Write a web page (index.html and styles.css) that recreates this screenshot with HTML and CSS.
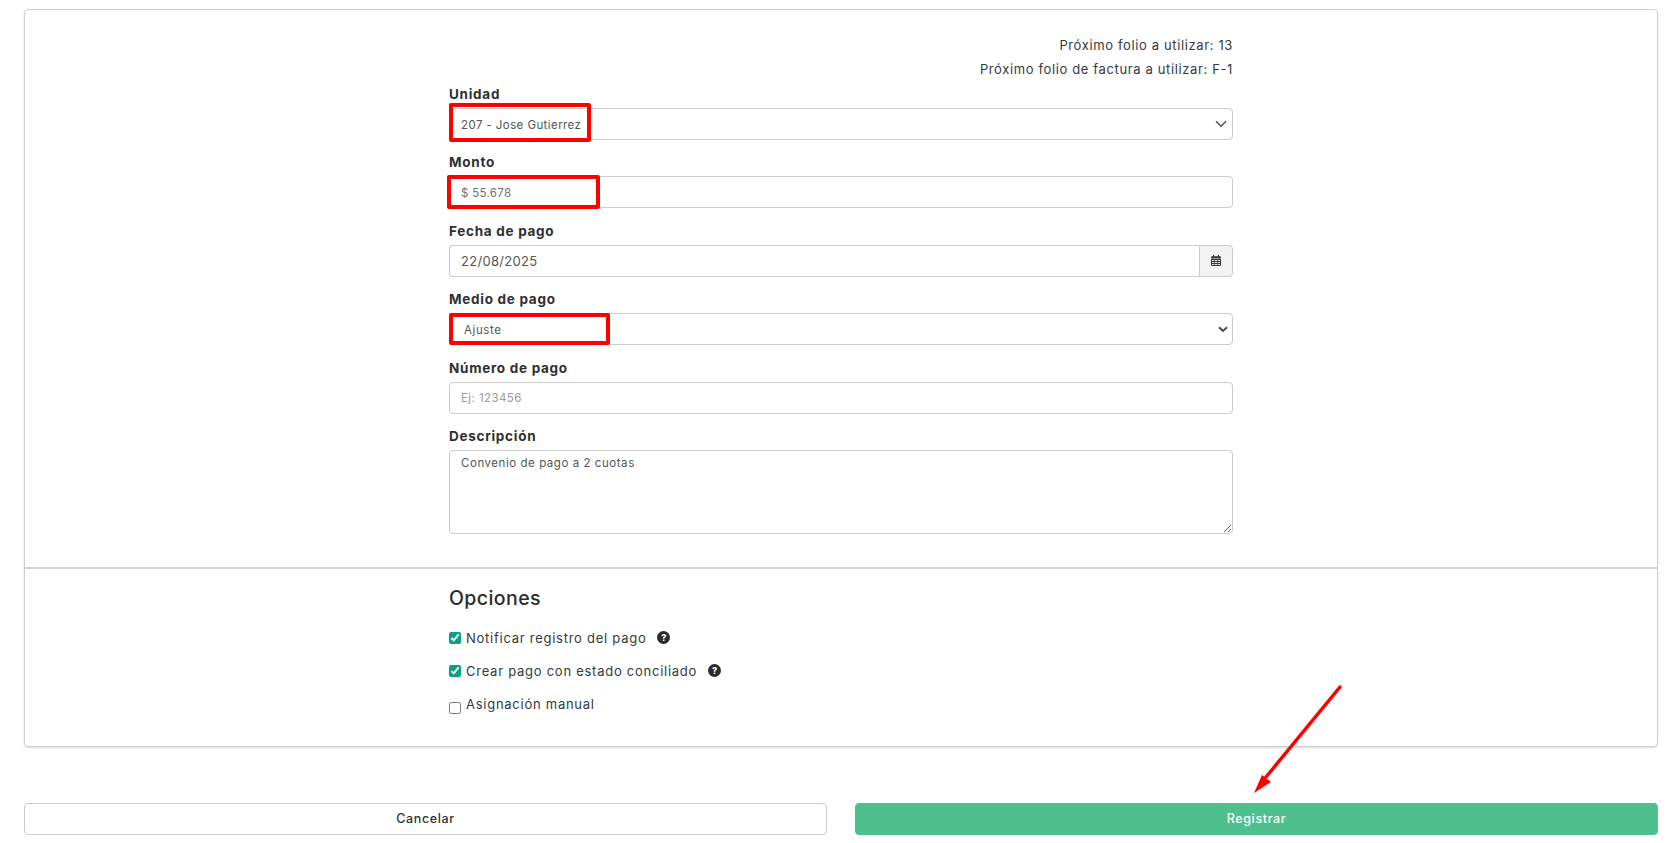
FILE: index.html
```html
<!DOCTYPE html>
<html lang="es">
<head>
<meta charset="utf-8">
<title>Registrar pago</title>
<link rel="stylesheet" href="styles.css">
</head>
<body>
<main class="page">
  <section class="card">
    <div class="form-part">
      <div class="col">
        <p class="folio first">Próximo folio a utilizar: 13</p>
        <p class="folio">Próximo folio de factura a utilizar: F-1</p>
        <div class="field">
          <label class="label">Unidad</label>
          <div class="control-box">
            <select class="control pick"><option>207 - Jose Gutierrez</option></select>
            <svg class="chev-thin" viewBox="0 0 12 8"><path d="M1 1.2l5 5 5-5" fill="none" stroke="#4a5560" stroke-width="1.5"/></svg>
            <span class="mark mark-unit"></span>
          </div>
        </div>
        <div class="field">
          <label class="label">Monto</label>
          <div class="control-box">
            <input class="control muted" value="$ 55.678">
            <span class="mark mark-monto"></span>
          </div>
        </div>
        <div class="field">
          <label class="label">Fecha de pago</label>
          <div class="group">
            <input class="control date" value="22/08/2025">
            <span class="addon">
              <svg class="cal" viewBox="0 0 10 11"><path fill="#343a40" d="M2 0h1.2v1.3h3.6V0H8v1.3h1.2c.4 0 .8.4.8.8V3.400H0V2.100c0-.4.4-.8.8-.8H2zM0 4h10v6.200c0 .4-.4.8-.8.8H.8c-.4 0-.8-.4-.8-.8zm1 1.100v1h1.800v-1zm2.600 0v1h2.800v-1zm3.600 0v1H9v-1zM1 7v1h1.800V7zm2.600 0v1h2.800V7zm3.600 0v1H9V7zM1 9v1h1.800V9zm2.600 0v1h2.800V9zm3.600 0v1H9V9z"/></svg>
            </span>
          </div>
        </div>
        <div class="field">
          <label class="label">Medio de pago</label>
          <div class="control-box">
            <select class="control pick medio"><option>Ajuste</option></select>
            <svg class="chev-bold" viewBox="0 0 10 7"><path d="M1 1.300l4 3.700 4-3.700" fill="none" stroke="#4a4a4a" stroke-width="2"/></svg>
            <span class="mark mark-medio"></span>
          </div>
        </div>
        <div class="field">
          <label class="label">Número de pago</label>
          <input class="control" placeholder="Ej: 123456">
        </div>
        <div class="field">
          <label class="label">Descripción</label>
          <textarea class="control area">Convenio de pago a 2 cuotas</textarea>
        </div>
      </div>
    </div>
    <div class="options-part">
      <div class="col">
        <h2 class="title">Opciones</h2>
        <div class="check-row">
          <input class="check" type="checkbox" checked>
          <span class="check-text">Notificar registro del pago</span>
          <span class="help">?</span>
        </div>
        <div class="check-row">
          <input class="check" type="checkbox" checked>
          <span class="check-text">Crear pago con estado conciliado</span>
          <span class="help">?</span>
        </div>
        <div class="check-row">
          <input class="check low" type="checkbox">
          <span class="check-text">Asignación manual</span>
        </div>
      </div>
    </div>
  </section>
  <div class="actions">
    <button class="btn cancel">Cancelar</button>
    <button class="btn submit">Registrar</button>
  </div>
</main>
<svg class="arrow" viewBox="0 0 100 120"><path d="M90 7L16 97" fill="none" stroke="#ff0000" stroke-width="3.500" stroke-linecap="round"/><path d="M4 113L12 95L21 102z" fill="#ff0000"/></svg>
</body>
</html>
```
FILE: styles.css
```css
* { box-sizing: border-box; }
html, body { margin: 0; padding: 0; background: #fff; }
body { font-family: "Inter", "Liberation Sans", sans-serif; color: #2b2b2b; position: relative; height: 843px; overflow: hidden; }
.page { padding: 9px 18px 0 24px; }
.card { border: 1px solid #cfcfcf; border-radius: 4px; box-shadow: 0 1px 2px rgba(0,0,0,.15); height: 738px; display: flex; flex-direction: column; }
.form-part { height: 559px; border-bottom: 2px solid #d2d2d2; padding-top: 27px; }
.options-part { flex: 1; padding-top: 17px; }
.col { width: 784px; margin-left: 424px; }
.folio { margin: 0 0 8px; height: 16px; line-height: 16px; text-align: right; font-size: 13px; letter-spacing: .63px; color: #343a40; }
.field { margin-bottom: 13.400px; }
.label { display: block; height: 23px; line-height: 18px; font-size: 13.500px; font-weight: 700; letter-spacing: .72px; color: #2f2f2f; }
.control-box { position: relative; }
.control { display: block; width: 100%; height: 32px; border: 1px solid #cbcbcb; border-radius: 4px; background: #fff; padding: 0 11px; font: 400 11.500px "Inter", "Liberation Sans", sans-serif; letter-spacing: .42px; color: #555; appearance: none; outline: none; }
.control::placeholder { color: #9a9a9a; opacity: 1; }
.pick { padding-top: 2px; }
.muted { color: #707070; letter-spacing: .3px; padding-top: 2px; }
.medio { padding-left: 14px; letter-spacing: .6px; }
.date { font-size: 13px; flex: 1; border-radius: 4px 0 0 4px; border-right: 0; color: #555; letter-spacing: .3px; }
.group { display: flex; height: 32px; }
.addon { width: 34px; border: 1px solid #cbcbcb; border-radius: 0 4px 4px 0; background: #f3f3f3; display: flex; align-items: center; justify-content: center; }
.cal { width: 10px; height: 11px; }
.area { height: 84px; padding-top: 5px; resize: vertical; line-height: 14px; letter-spacing: .55px; }
.chev-thin { position: absolute; right: 6px; top: 12px; width: 12px; height: 8px; }
.chev-bold { position: absolute; right: 5px; top: 13px; width: 10px; height: 7px; }
.mark { position: absolute; border: 4px solid #ff0000; border-radius: 2px; pointer-events: none; }
.mark-unit { left: 0; top: -5px; width: 142px; height: 39px; }
.mark-monto { left: -2px; top: -1px; width: 153px; height: 34px; }
.mark-medio { left: 0; top: 0; width: 161px; height: 32px; }
.title { margin: 0 0 19px; height: 24px; line-height: 24px; font-size: 19.500px; font-weight: 500; letter-spacing: .42px; color: #2b2b2b; }
.check-row { display: flex; align-items: center; height: 17px; margin-bottom: 16px; }
.check { width: 12px; height: 12px; margin: 0 5px 0 0; accent-color: #0b9f83; flex: none; }
.check.low { position: relative; top: 4px; }
.check-text { font-size: 13px; letter-spacing: .74px; color: #343a40; }
.help { width: 13px; height: 13px; margin-left: 11px; border-radius: 50%; background: #292b2c; color: #fff; font-size: 9px; font-weight: 800; line-height: 13px; text-align: center; }
.actions { display: flex; gap: 28px; margin-top: 56px; }
.btn { flex: 1; height: 32px; padding: 0 0 2px; border-radius: 4px; font: 500 12.500px "Inter", "Liberation Sans", sans-serif; letter-spacing: .65px; }
.cancel { background: #fff; border: 1px solid #cbcbcb; color: #2f2f2f; }
.submit { background: #4ec08d; border: 1px solid #4ec08d; color: #fff; }
.arrow { position: absolute; left: 1250px; top: 680px; width: 100px; height: 120px; }
```
